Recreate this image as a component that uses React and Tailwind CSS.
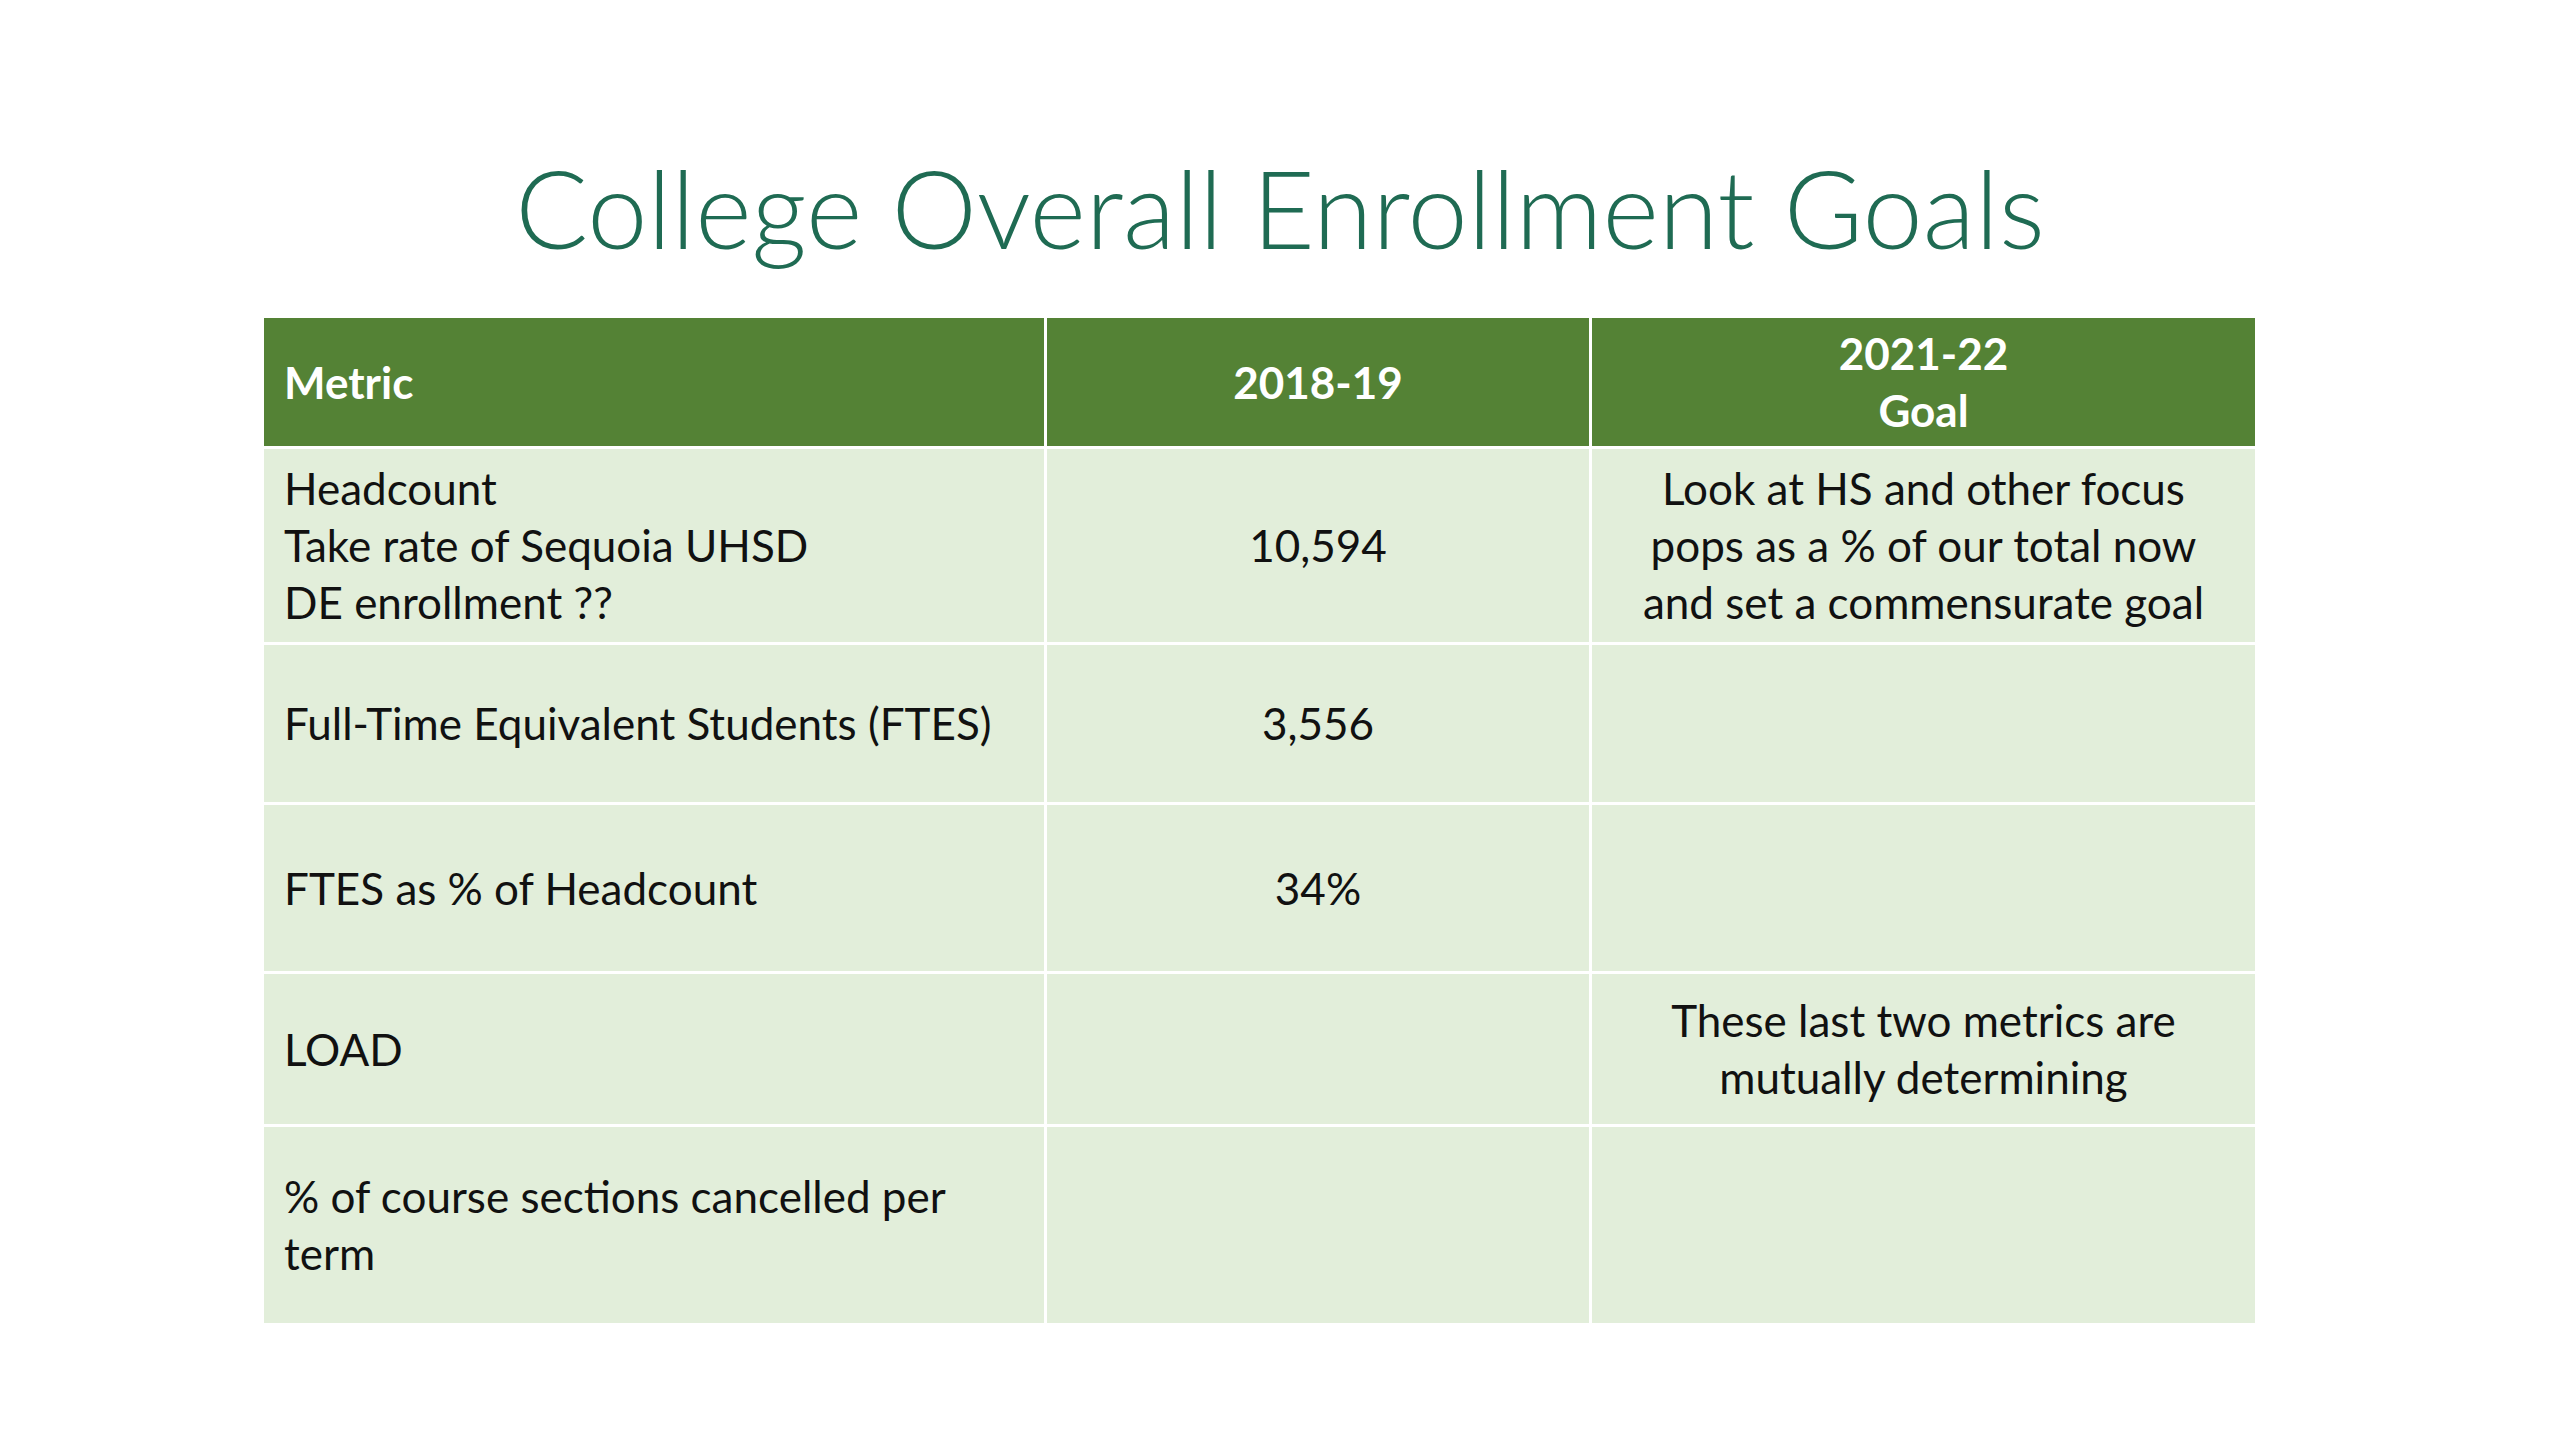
import React from 'react';

const rows = [
    {
        metric: ['Headcount', 'Take rate of Sequoia UHSD', 'DE enrollment ??'],
        base: '10,594',
        goal: ['Look at HS and other focus', 'pops as a % of our total now', 'and set a commensurate goal'],
        h: 'h-[193px]',
    },
    { metric: ['Full-Time Equivalent Students (FTES)'], base: '3,556', goal: [], h: 'h-[157px]' },
    { metric: ['FTES as % of Headcount'], base: '34%', goal: [], h: 'h-[166px]' },
    { metric: ['LOAD'], base: '', goal: ['These last two metrics are', 'mutually determining'], h: 'h-[150px]' },
    { metric: ['% of course sections cancelled per', 'term'], base: '', goal: [], h: 'h-[196px]' },
];

function Lines({ lines }) {
    return lines.map((line, i) => <div key={i}>{line}</div>);
}

export default function App() {
    return (
        <div className="w-[2560px] h-[1440px] bg-white font-['Lato',sans-serif] text-[#111]">
            <div className="pt-[145px] h-[276px] flex justify-center">
                <h1 className="text-[108px] leading-[124px] font-light text-[#1f6b53]">
                    College Overall Enrollment Goals
                </h1>
            </div>

            <div className="mt-[42px] pl-[264px]">
                <div className="grid grid-cols-[780px_542px_663px] gap-x-[3px] gap-y-[3px] text-[44px] leading-[57px]">
                    {/* header */}
                    <div className="h-[128px] bg-[#548235] text-white font-bold flex items-center px-[20px]">
                        Metric
                    </div>
                    <div className="h-[128px] bg-[#548235] text-white font-bold flex items-center justify-center">
                        2018-19
                    </div>
                    <div className="h-[128px] bg-[#548235] text-white font-bold flex flex-col items-center justify-center">
                        <div>2021-22</div>
                        <div>Goal</div>
                    </div>

                    {rows.map((row, i) => (
                        <React.Fragment key={i}>
                            <div className={`${row.h} bg-[#e2eeda] flex flex-col justify-center px-[20px]`}>
                                <Lines lines={row.metric} />
                            </div>
                            <div className={`${row.h} bg-[#e2eeda] flex items-center justify-center`}>
                                {row.base}
                            </div>
                            <div className={`${row.h} bg-[#e2eeda] flex flex-col items-center justify-center text-center`}>
                                <Lines lines={row.goal} />
                            </div>
                        </React.Fragment>
                    ))}
                </div>
            </div>
        </div>
    );
}
